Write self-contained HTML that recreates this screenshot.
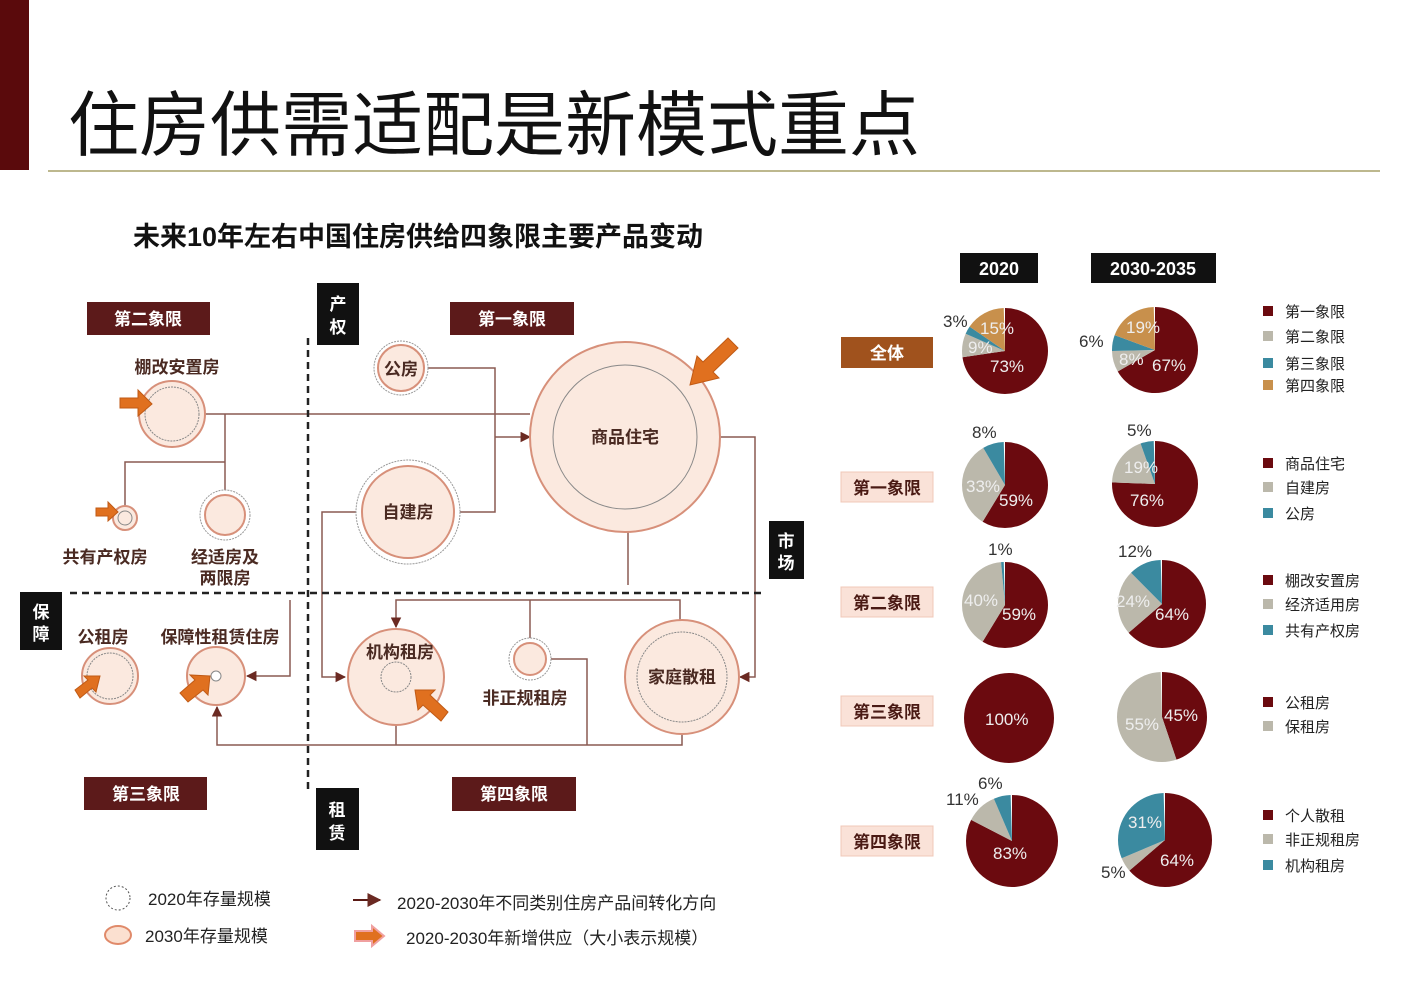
<!DOCTYPE html>
<html><head><meta charset="utf-8"><style>
html,body{margin:0;padding:0;background:#fff;}
svg{display:block;font-family:"Liberation Sans","Noto Sans CJK SC",sans-serif;}
.b{font-weight:bold;}
</style></head><body>
<svg width="1420" height="1008" viewBox="0 0 1420 1008" xmlns="http://www.w3.org/2000/svg">
<defs>
<marker id="ar" viewBox="0 0 10 10" refX="9" refY="5" markerWidth="7" markerHeight="7" orient="auto"><path d="M0,0 L10,5 L0,10 z" fill="#6b2a22"/></marker>
</defs>
<rect x="0" y="0" width="29" height="170" fill="#5a0a0c"/>
<text x="68" y="150" font-size="71" fill="#111" font-family="Liberation Sans,Noto Sans CJK SC,sans-serif">住房供需适配是新模式重点</text>
<line x1="48" y1="171" x2="1380" y2="171" stroke="#bdb88e" stroke-width="2"/>
<text x="133" y="246" font-size="27" class="b" fill="#111">未来10年左右中国住房供给四象限主要产品变动</text>

<!-- connection lines -->
<g stroke="#8a5a52" stroke-width="1.5" fill="none">
<polyline points="205,414 530,414"/>
<polyline points="225,414 225,490"/>
<polyline points="225,462 125,462 125,507"/>
<polyline points="428,368 495,368 495,437"/>
<polyline points="458,512 495,512 495,437"/>
<polyline points="495,437 530,437" marker-end="url(#ar)"/>
<polyline points="720,437 755,437 755,677 740,677" marker-end="url(#ar)"/>
<polyline points="628,532 628,585"/>
<polyline points="358,512 322,512 322,677 345,677" marker-end="url(#ar)"/>
<polyline points="680,622 680,600 396,600 396,627" marker-end="url(#ar)"/>
<polyline points="530,600 530,639"/>
<polyline points="550,659 587,659 587,745"/>
<polyline points="396,725 396,745"/>
<polyline points="682,732 682,745 217,745 217,707" marker-end="url(#ar)"/>
<polyline points="290,600 290,676 247,676" marker-end="url(#ar)"/>
</g>
<line x1="308" y1="338" x2="308" y2="792" stroke="#222" stroke-width="2.5" stroke-dasharray="7,5"/>
<line x1="70" y1="593" x2="765" y2="593" stroke="#222" stroke-width="2.5" stroke-dasharray="7,5"/>

<!-- circles -->
<g fill="#fbe9df" stroke="#d7907a" stroke-width="2">
<circle cx="172" cy="414" r="33"/><circle cx="172" cy="414" r="27" fill="none" stroke="#888" stroke-width="1" stroke-dasharray="2,1"/>
<circle cx="125" cy="518" r="12"/><circle cx="125" cy="518" r="7" fill="none" stroke="#888" stroke-width="1"/>
<circle cx="225" cy="515" r="25" fill="#fff" stroke="#999" stroke-width="1" stroke-dasharray="2,1"/><circle cx="225" cy="515" r="20"/>
<circle cx="401" cy="368" r="27" fill="#fff" stroke="#999" stroke-width="1" stroke-dasharray="2,1"/><circle cx="401" cy="368" r="23"/>
<circle cx="408" cy="512" r="52" fill="#fff" stroke="#999" stroke-width="1" stroke-dasharray="2,1"/><circle cx="408" cy="512" r="46"/>
<circle cx="625" cy="437" r="95"/><circle cx="625" cy="437" r="72" fill="none" stroke="#888" stroke-width="1"/>
<circle cx="110" cy="676" r="28"/><circle cx="110" cy="676" r="23" fill="none" stroke="#888" stroke-width="1" stroke-dasharray="2,1"/>
<circle cx="216" cy="676" r="29"/><circle cx="216" cy="676" r="5" fill="#fff" stroke="#888" stroke-width="1"/>
<circle cx="396" cy="677" r="48"/><circle cx="396" cy="677" r="15" fill="none" stroke="#888" stroke-width="1" stroke-dasharray="2,1"/>
<circle cx="530" cy="659" r="21" fill="#fff" stroke="#999" stroke-width="1" stroke-dasharray="2,1"/><circle cx="530" cy="659" r="16"/>
<circle cx="682" cy="677" r="57"/><circle cx="682" cy="677" r="45" fill="none" stroke="#888" stroke-width="1" stroke-dasharray="2,1"/>
</g>
<!-- orange arrows -->
<g fill="#e0701f" stroke="#c05a15" stroke-width="1">
<path d="M120,398 L138,398 L138,390 L152,404 L138,416 L138,408 L120,408z"/>
<path d="M96,508 L108,508 L108,502 L118,512 L108,521 L108,516 L96,516z"/>
<path d="M728,338 L703,362 L697,356 L690,385 L719,378 L713,372 L738,348z"/>
<path d="M75,690 L88,680 L84,676 L100,676 L96,692 L92,688 L80,698z"/>
<path d="M180,693 L195,680 L190,675 L210,676 L208,695 L203,690 L188,702z"/>
<path d="M448,712 L430,695 L435,690 L415,690 L418,710 L423,705 L441,721z"/>
</g>

<!-- diagram text -->
<g font-size="17" class="b" fill="#4a2a22" text-anchor="middle">
<text x="177" y="373">棚改安置房</text>
<text x="105" y="563">共有产权房</text>
<text x="225" y="563">经适房及</text><text x="225" y="584">两限房</text>
<text x="401" y="375">公房</text>
<text x="408" y="518">自建房</text>
<text x="625" y="443">商品住宅</text>
<text x="103" y="643">公租房</text>
<text x="220" y="643">保障性租赁住房</text>
<text x="400" y="658">机构租房</text>
<text x="525" y="704">非正规租房</text>
<text x="682" y="683">家庭散租</text>
</g>
<!-- quadrant boxes -->
<g font-size="17" class="b" fill="#fff" text-anchor="middle">
<rect x="87" y="302" width="123" height="33" fill="#5c1a1a"/><text x="148" y="325">第二象限</text>
<rect x="450" y="302" width="124" height="33" fill="#5c1a1a"/><text x="512" y="325">第一象限</text>
<rect x="84" y="777" width="123" height="33" fill="#5c1a1a"/><text x="146" y="800">第三象限</text>
<rect x="452" y="777" width="124" height="34" fill="#5c1a1a"/><text x="514" y="800">第四象限</text>
<rect x="317" y="283" width="42" height="62" fill="#111"/><text x="338" y="310">产</text><text x="338" y="333">权</text>
<rect x="769" y="521" width="35" height="58" fill="#111"/><text x="786" y="547">市</text><text x="786" y="569">场</text>
<rect x="20" y="592" width="42" height="58" fill="#111"/><text x="41" y="618">保</text><text x="41" y="640">障</text>
<rect x="316" y="788" width="43" height="62" fill="#111"/><text x="337" y="816">租</text><text x="337" y="839">赁</text>
</g>
<!-- legend -->
<circle cx="118" cy="898" r="12" fill="#fff" stroke="#555" stroke-width="1" stroke-dasharray="2,2"/>
<ellipse cx="118" cy="935" rx="13" ry="9" fill="#fbe0d0" stroke="#e08a6a" stroke-width="2"/>
<g font-size="17" fill="#222">
<text x="148" y="905">2020年存量规模</text>
<text x="145" y="942">2030年存量规模</text>
<text x="397" y="909">2020-2030年不同类别住房产品间转化方向</text>
<text x="406" y="944">2020-2030年新增供应（大小表示规模）</text>
</g>
<line x1="353" y1="900" x2="380" y2="900" stroke="#5a1a14" stroke-width="2" marker-end="url(#ar)"/>
<path d="M355,931 L372,931 L372,926 L384,936 L372,946 L372,941 L355,941z" fill="#e0701f" stroke="#f0a0a0" stroke-width="2"/>

<!-- pie headers -->
<rect x="960" y="253" width="78" height="30" fill="#111"/><text x="999" y="275" font-size="18" class="b" fill="#fff" text-anchor="middle">2020</text>
<rect x="1091" y="253" width="125" height="30" fill="#111"/><text x="1153" y="275" font-size="18" class="b" fill="#fff" text-anchor="middle">2030-2035</text>
<!-- row labels -->
<g font-size="17" class="b" text-anchor="middle">
<rect x="841" y="337" width="92" height="31" fill="#a0521d"/><text x="887" y="359" fill="#fff">全体</text>
<rect x="841" y="472" width="92" height="30" fill="#fae2d8" stroke="#f0c8b8"/><text x="887" y="494" fill="#4a1a14">第一象限</text>
<rect x="841" y="587" width="92" height="30" fill="#fae2d8" stroke="#f0c8b8"/><text x="887" y="609" fill="#4a1a14">第二象限</text>
<rect x="841" y="696" width="92" height="30" fill="#fae2d8" stroke="#f0c8b8"/><text x="887" y="718" fill="#4a1a14">第三象限</text>
<rect x="841" y="826" width="92" height="30" fill="#fae2d8" stroke="#f0c8b8"/><text x="887" y="848" fill="#4a1a14">第四象限</text>
</g>

<!-- pies -->
<g transform="translate(1005,351) rotate(-90)" fill="none" stroke-width="43">
<circle r="21.5" pathLength="100" stroke="#6b0a0f" stroke-dasharray="73 100"/>
<circle r="21.5" pathLength="100" stroke="#bbb8ab" stroke-dasharray="9 100" stroke-dashoffset="-73"/>
<circle r="21.5" pathLength="100" stroke="#3b8aa0" stroke-dasharray="3 100" stroke-dashoffset="-82"/>
<circle r="21.5" pathLength="100" stroke="#c8904c" stroke-dasharray="15 100" stroke-dashoffset="-85"/>
</g>
<g transform="translate(1155,350) rotate(-90)" fill="none" stroke-width="43">
<circle r="21.5" pathLength="100" stroke="#6b0a0f" stroke-dasharray="67 100"/>
<circle r="21.5" pathLength="100" stroke="#bbb8ab" stroke-dasharray="8 100" stroke-dashoffset="-67"/>
<circle r="21.5" pathLength="100" stroke="#3b8aa0" stroke-dasharray="6 100" stroke-dashoffset="-75"/>
<circle r="21.5" pathLength="100" stroke="#c8904c" stroke-dasharray="19 100" stroke-dashoffset="-81"/>
</g>
<g transform="translate(1005,485) rotate(-90)" fill="none" stroke-width="43">
<circle r="21.5" pathLength="100" stroke="#6b0a0f" stroke-dasharray="59 100"/>
<circle r="21.5" pathLength="100" stroke="#bbb8ab" stroke-dasharray="33 100" stroke-dashoffset="-59"/>
<circle r="21.5" pathLength="100" stroke="#3b8aa0" stroke-dasharray="8 100" stroke-dashoffset="-92"/>
</g>
<g transform="translate(1155,484) rotate(-90)" fill="none" stroke-width="43">
<circle r="21.5" pathLength="100" stroke="#6b0a0f" stroke-dasharray="76 100"/>
<circle r="21.5" pathLength="100" stroke="#bbb8ab" stroke-dasharray="19 100" stroke-dashoffset="-76"/>
<circle r="21.5" pathLength="100" stroke="#3b8aa0" stroke-dasharray="5 100" stroke-dashoffset="-95"/>
</g>
<g transform="translate(1005,605) rotate(-90)" fill="none" stroke-width="43">
<circle r="21.5" pathLength="100" stroke="#6b0a0f" stroke-dasharray="59 100"/>
<circle r="21.5" pathLength="100" stroke="#bbb8ab" stroke-dasharray="40 100" stroke-dashoffset="-59"/>
<circle r="21.5" pathLength="100" stroke="#3b8aa0" stroke-dasharray="1 100" stroke-dashoffset="-99"/>
</g>
<g transform="translate(1162,604) rotate(-90)" fill="none" stroke-width="44">
<circle r="22" pathLength="100" stroke="#6b0a0f" stroke-dasharray="64 100"/>
<circle r="22" pathLength="100" stroke="#bbb8ab" stroke-dasharray="24 100" stroke-dashoffset="-64"/>
<circle r="22" pathLength="100" stroke="#3b8aa0" stroke-dasharray="12 100" stroke-dashoffset="-88"/>
</g>
<circle cx="1009" cy="718" r="45" fill="#6b0a0f"/>
<g transform="translate(1162,717) rotate(-90)" fill="none" stroke-width="45">
<circle r="22.5" pathLength="100" stroke="#6b0a0f" stroke-dasharray="45 100"/>
<circle r="22.5" pathLength="100" stroke="#bbb8ab" stroke-dasharray="55 100" stroke-dashoffset="-45"/>
</g>
<g transform="translate(1012,841) rotate(-90)" fill="none" stroke-width="46">
<circle r="23" pathLength="100" stroke="#6b0a0f" stroke-dasharray="83 100"/>
<circle r="23" pathLength="100" stroke="#bbb8ab" stroke-dasharray="11 100" stroke-dashoffset="-83"/>
<circle r="23" pathLength="100" stroke="#3b8aa0" stroke-dasharray="6 100" stroke-dashoffset="-94"/>
</g>
<g transform="translate(1165,840) rotate(-90)" fill="none" stroke-width="47">
<circle r="23.5" pathLength="100" stroke="#6b0a0f" stroke-dasharray="64 100"/>
<circle r="23.5" pathLength="100" stroke="#bbb8ab" stroke-dasharray="5 100" stroke-dashoffset="-64"/>
<circle r="23.5" pathLength="100" stroke="#3b8aa0" stroke-dasharray="31 100" stroke-dashoffset="-69"/>
</g>

<!-- pie labels -->
<g font-size="17">
<g fill="#eee"><text x="980" y="334">15%</text><text x="968" y="353">9%</text><text x="990" y="372">73%</text>
<text x="1126" y="333">19%</text><text x="1119" y="365">8%</text><text x="1152" y="371">67%</text>
<text x="966" y="492">33%</text><text x="999" y="506">59%</text>
<text x="1124" y="473">19%</text><text x="1130" y="506">76%</text>
<text x="964" y="606">40%</text><text x="1002" y="620">59%</text>
<text x="1116" y="607">24%</text><text x="1155" y="620">64%</text>
<text x="985" y="725">100%</text>
<text x="1125" y="730">55%</text><text x="1164" y="721">45%</text>
<text x="993" y="859">83%</text>
<text x="1128" y="828">31%</text><text x="1160" y="866">64%</text></g>
<g fill="#333"><text x="943" y="327">3%</text><text x="1079" y="347">6%</text>
<text x="972" y="438">8%</text><text x="1127" y="436">5%</text>
<text x="988" y="555">1%</text><text x="1118" y="557">12%</text>
<text x="978" y="789">6%</text><text x="946" y="805">11%</text><text x="1101" y="878">5%</text></g>
</g>

<!-- legends -->
<g font-size="15" fill="#222">
<rect x="1263" y="306" width="10" height="10" fill="#6b0a0f"/><text x="1285" y="317">第一象限</text>
<rect x="1263" y="331" width="10" height="10" fill="#bbb8ab"/><text x="1285" y="342">第二象限</text>
<rect x="1263" y="358" width="10" height="10" fill="#3b8aa0"/><text x="1285" y="369">第三象限</text>
<rect x="1263" y="380" width="10" height="10" fill="#c8904c"/><text x="1285" y="391">第四象限</text>
<rect x="1263" y="458" width="10" height="10" fill="#6b0a0f"/><text x="1285" y="469">商品住宅</text>
<rect x="1263" y="482" width="10" height="10" fill="#bbb8ab"/><text x="1285" y="493">自建房</text>
<rect x="1263" y="508" width="10" height="10" fill="#3b8aa0"/><text x="1285" y="519">公房</text>
<rect x="1263" y="575" width="10" height="10" fill="#6b0a0f"/><text x="1285" y="586">棚改安置房</text>
<rect x="1263" y="599" width="10" height="10" fill="#bbb8ab"/><text x="1285" y="610">经济适用房</text>
<rect x="1263" y="625" width="10" height="10" fill="#3b8aa0"/><text x="1285" y="636">共有产权房</text>
<rect x="1263" y="697" width="10" height="10" fill="#6b0a0f"/><text x="1285" y="708">公租房</text>
<rect x="1263" y="721" width="10" height="10" fill="#bbb8ab"/><text x="1285" y="732">保租房</text>
<rect x="1263" y="810" width="10" height="10" fill="#6b0a0f"/><text x="1285" y="821">个人散租</text>
<rect x="1263" y="834" width="10" height="10" fill="#bbb8ab"/><text x="1285" y="845">非正规租房</text>
<rect x="1263" y="860" width="10" height="10" fill="#3b8aa0"/><text x="1285" y="871">机构租房</text>
</g>
</svg>
</body></html>
